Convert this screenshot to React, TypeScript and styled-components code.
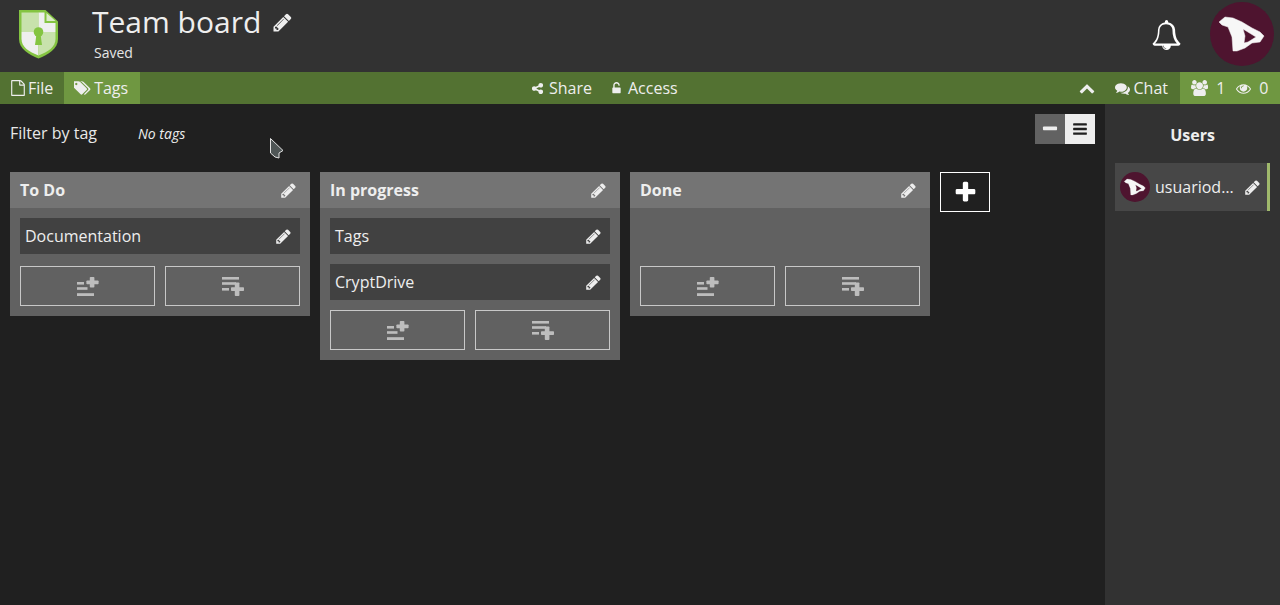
import React from "react";
import styled, { createGlobalStyle } from "styled-components";

const Global = createGlobalStyle`
  html, body { margin: 0; padding: 0; height: 100%; background: #202020; overflow: hidden; }
  body { font-family: "Open Sans", "Liberation Sans", sans-serif; color: #eee; }
  #root { height: 100%; }
  * { box-sizing: border-box; }
`;

const Page = styled.div`
  width: 1280px; height: 605px; display: flex; flex-direction: column; position: relative;
`;
const TopBar = styled.header`
  height: 72px; flex: none; background: #323232; display: flex; align-items: flex-start;
  padding-left: 18px;
`;
const LogoSlot = styled.div`width: 74px; padding-top: 9px; flex: none;`;
const TitleBlock = styled.div`display: flex; flex-direction: column; flex: 1;`;
const TitleRow = styled.div`display: flex; align-items: center; gap: 11px; height: 44px;`;
const Title = styled.h1`margin: 0; font-size: 30px; font-weight: 400; line-height: 44px; color: #eee;`;
const SavedText = styled.span`font-size: 14px; line-height: 19px; margin: -1px 0 0 2px; color: #e6e6e6;`;
const BellSlot = styled.div`
  width: 30px; height: 72px; margin-right: 29px; display: flex; align-items: center; justify-content: center;
  padding-bottom: 2px; color: #fff;
`;
const AvatarSlot = styled.div`margin: 2px 6px 0 0; width: 64px; height: 64px;`;

const ToolBar = styled.nav`
  height: 32px; flex: none; background: #537232; display: grid; grid-template-columns: 531px auto 1fr;
  font-size: 16px; color: #eee;
`;
const ToolGroup = styled.div<{ $end?: boolean }>`
  display: flex; align-items: stretch; justify-content: ${(p) => (p.$end ? "flex-end" : "flex-start")};
`;
const ToolItem = styled.div<{ $tone?: "light"; $width?: number; $gap?: number; $padEnd?: number }>`
  display: flex; align-items: center; gap: ${(p) => p.$gap ?? 4}px; padding: 0 ${(p) => p.$padEnd ?? 10}px 0 10px;
  ${(p) => (p.$width ? `width: ${p.$width}px;` : "")}
  background: ${(p) => (p.$tone === "light" ? "#6f9741" : "transparent")};
  & svg { flex: none; }
`;
const Stats = styled(ToolItem)`padding: 0 11px; gap: 8px;`;
const StatNum = styled.span`margin-right: 3px; &:last-child { margin-right: 0; }`;
const CenterGroup = styled.div`display: flex; align-items: center; gap: 18px;`;
const CenterItem = styled.div`display: flex; align-items: center; gap: 5px;`;

const Body = styled.div`flex: 1; display: flex; min-height: 0;`;
const Board = styled.main`flex: 1; background: #202020; padding: 10px; min-width: 0;`;
const FilterRow = styled.div`height: 58px; display: flex; align-items: flex-start; justify-content: space-between;`;
const FilterInfo = styled.div`display: flex; align-items: center; height: 38px;`;
const FilterLabel = styled.span`font-size: 16px; width: 128px; color: #e8e8e8;`;
const NoTags = styled.em`font-size: 14px; color: #eee;`;
const ViewToggle = styled.div`display: flex;`;
const ToggleBtn = styled.button<{ $active?: boolean }>`
  width: 30px; height: 30px; border: 0; padding: 0; display: flex; align-items: center; justify-content: center;
  background: ${(p) => (p.$active ? "#eeeeee" : "#626262")};
  color: ${(p) => (p.$active ? "#202020" : "#eeeeee")};
`;

const Columns = styled.div`display: flex; align-items: flex-start; gap: 10px;`;
const Column = styled.section`width: 300px; background: #616161;`;
const ColumnHead = styled.div`
  height: 36px; background: #747474; display: flex; align-items: center; justify-content: space-between;
  padding: 0 13px 0 10px; font-size: 16px; font-weight: 700; color: #eee;
`;
const ColumnBody = styled.div`padding: 10px;`;
const CardList = styled.div`min-height: 48px; display: flex; flex-direction: column; gap: 10px; padding-bottom: 10px;`;
const Card = styled.div`
  height: 36px; background: #414141; display: flex; align-items: center; justify-content: space-between;
  padding: 0 8px 0 5px; font-size: 16px; color: #eee;
`;
const AddRow = styled.div`display: flex; gap: 10px;`;
const AddBtn = styled.button`
  flex: 1; height: 40px; background: transparent; border: 1px solid #c8c8c8; padding: 0;
  display: flex; align-items: center; justify-content: center; color: #bdbdbd;
`;
const NewColumn = styled.button`
  width: 50px; height: 40px; background: transparent; border: 1px solid #fff; padding: 0; color: #fff;
  display: flex; align-items: center; justify-content: center;
`;

const Side = styled.aside`width: 175px; flex: none; background: #323232; padding: 0 10px;`;
const SideTitle = styled.h2`
  margin: 0; height: 59px; font-size: 16px; font-weight: 700; text-align: center; line-height: 62px; color: #eee;
`;
const UserRow = styled.div`
  height: 48px; background: #474747; border-right: 3px solid #a0b96c; display: flex; align-items: center;
  padding-left: 5px; font-size: 16px; color: #eee;
`;
const UserName = styled.span`
  width: 80px; margin: 0 9px 0 5px; white-space: nowrap; flex: none;
`;
const CursorMark = styled.svg`position: absolute; left: 270px; top: 138px;`;

const paths = {
  pencil: "M491 1536l91-91-235-235-91 91v107h128v128h107zm523-928q0-22-22-22-10 0-17 7l-542 542q-7 7-7 17 0 22 22 22 10 0 17-7l542-542q7-7 7-17zm-54-192l416 416-832 832h-416v-416zm683 96q0 53-37 90l-166 166-416-416 166-165q36-38 90-38 53 0 91 38l235 234q37 39 37 91z",
  bell: "M912 1696q0-16-16-16-59 0-101.5-42.5t-42.5-101.5q0-16-16-16t-16 16q0 73 51.5 124.5t124.5 51.5q16 0 16-16zm-666-288h1300q-266-300-266-832 0-51-24-105t-69-103-121.5-80.5-169.5-31.5-169.5 31.5-121.5 80.5-69 103-24 105q0 532-266 832zm1514 0q0 52-38 90t-90 38h-448q0 106-75 181t-181 75-181-75-75-181h-448q-52 0-90-38t-38-90q50-42 91-88t85-119.5 74.5-158.5 50-206 19.5-260q0-152 117-282.5t307-158.5q-8-19-8-39 0-40 28-68t68-28 68 28 28 68q0 20-8 39 190 28 307 158.5t117 282.5q0 139 19.5 260t50 206 74.5 158.5 85 119.5 91 88z",
  file: "M1596 380q28 28 48 76t20 88v1152q0 40-28 68t-68 28h-1344q-40 0-68-28t-28-68v-1600q0-40 28-68t68-28h896q40 0 88 20t76 48zm-444-244v376h376q-10-29-22-41l-313-313q-12-12-41-22zm384 1528v-1024h-416q-40 0-68-28t-28-68v-416h-768v1536h1280z",
  tags: "M384 448q0-53-37.5-90.5t-90.5-37.5-90.5 37.5-37.5 90.5 37.5 90.5 90.5 37.5 90.5-37.5 37.5-90.5zm1067 576q0 53-37 90l-491 492q-39 37-91 37-53 0-90-37l-715-716q-38-37-64.5-101t-26.5-117v-416q0-52 38-90t90-38h416q53 0 117 26.5t102 64.5l715 714q37 39 37 91zm384 0q0 53-37 90l-491 492q-39 37-91 37-36 0-59-14t-53-45l470-470q37-37 37-90 0-52-37-91l-715-714q-38-38-102-64.5t-117-26.5h224q53 0 117 26.5t102 64.5l715 714q37 39 37 91z",
  share: "M1344 1024q133 0 226.5 93.5t93.5 226.5-93.5 226.5-226.5 93.5-226.5-93.5-93.5-226.5q0-12 2-34l-360-180q-92 86-218 86-133 0-226.5-93.5t-93.5-226.5 93.5-226.5 226.5-93.5q126 0 218 86l360-180q-2-22-2-34 0-133 93.5-226.5t226.5-93.5 226.5 93.5 93.5 226.5-93.5 226.5-226.5 93.5q-126 0-218-86l-360 180q2 22 2 34t-2 34l360 180q92-86 218-86z",
  unlock: "M1376 768q40 0 68 28t28 68v576q0 40-28 68t-68 28h-960q-40 0-68-28t-28-68v-576q0-40 28-68t68-28h32v-320q0-185 131.5-316.5t316.5-131.5 316.5 131.5 131.5 316.5q0 26-19 45t-45 19h-64q-26 0-45-19t-19-45q0-106-75-181t-181-75-181 75-75 181v320h736z",
  comments: "M1408 768q0 139-94 257t-256.5 186.5-353.5 68.5q-86 0-176-16-124 88-278 128-36 9-86 16h-3q-11 0-20.5-8t-11.5-21q-1-3-1-6.5t.5-6.5 2-6l2.5-5 3.5-5.5 4-5 4.5-5 4-4.5q5-6 23-25t26-29.5 22.5-29 25-38.5 20.5-44q-124-72-195-177t-71-224q0-139 94-257t256.5-186.5 353.5-68.5 353.5 68.5 256.5 186.5 94 257zm384 256q0 120-71 224.5t-195 176.5q10 24 20.5 44t25 38.5 22.5 29 26 29.5 23 25q1 1 4 4.5t4.5 5 4 5 3.5 5.5l2.5 5 2 6 .5 6.5-1 6.5q-3 14-13 22t-22 7q-50-7-86-16-154-40-278-128-90 16-176 16-271 0-472-132 58 4 88 4 161 0 309-45t264-129q125-92 192-212t67-254q0-77-23-152 129 71 204 178t75 230z",
  users: "M593 896q-162 5-265 128h-134q-82 0-138-40.5t-56-118.5q0-353 124-353 6 0 43.5 21t97.5 42.5 119 21.5q67 0 133-23-5 37-5 66 0 139 81 256zm1071 637q0 120-73 189.5t-194 69.5h-874q-121 0-194-69.5t-73-189.5q0-53 3.5-103.5t14-109 26.5-108.5 43-97.5 62-81 85.5-53.5 111.5-20q10 0 43 21.5t73 48 107 48 135 21.5 135-21.5 107-48 73-48 43-21.5q61 0 111.5 20t85.5 53.5 62 81 43 97.5 26.5 108.5 14 109 3.5 103.5zm-1024-1277q0 106-75 181t-181 75-181-75-75-181 75-181 181-75 181 75 75 181zm704 384q0 159-112.5 271.5t-271.5 112.5-271.5-112.5-112.5-271.5 112.5-271.5 271.5-112.5 271.5 112.5 112.5 271.5zm576 225q0 78-56 118.5t-138 40.5h-134q-103-123-265-128 81-117 81-256 0-29-5-66 66 23 133 23 59 0 119-21.5t97.5-42.5 43.5-21q124 0 124 353zm-128-609q0 106-75 181t-181 75-181-75-75-181 75-181 181-75 181 75 75 181z",
  eye: "M1664 960q-152-236-381-353 61 104 61 225 0 185-131.5 316.5t-316.5 131.5-316.5-131.5-131.5-316.5q0-121 61-225-229 117-381 353 133 205 333.5 326.5t434.5 121.5 434.5-121.5 333.5-326.5zm-720-384q0-20-14-34t-34-14q-125 0-214.5 89.5t-89.5 214.5q0 20 14 34t34 14 34-14 14-34q0-86 61-147t147-61q20 0 34-14t14-34zm848 384q0 34-20 69-140 230-376.5 368.5t-499.5 138.5-499.5-139-376.5-368q-20-35-20-69t20-69q140-229 376.5-368t499.5-139 499.5 139 376.5 368q20 35 20 69z",
  bars: "M1664 1344v128q0 26-19 45t-45 19h-1408q-26 0-45-19t-19-45v-128q0-26 19-45t45-19h1408q26 0 45 19t19 45zm0-512v128q0 26-19 45t-45 19h-1408q-26 0-45-19t-19-45v-128q0-26 19-45t45-19h1408q26 0 45 19t19 45zm0-512v128q0 26-19 45t-45 19h-1408q-26 0-45-19t-19-45v-128q0-26 19-45t45-19h1408q26 0 45 19t19 45z",
  plus: "M1600 736v192q0 40-28 68t-68 28h-416v416q0 40-28 68t-68 28h-192q-40 0-68-28t-28-68v-416h-416q-40 0-68-28t-28-68v-192q0-40 28-68t68-28h416v-416q0-40 28-68t68-28h192q40 0 68 28t28 68v416h416q40 0 68 28t28 68z",
  minus: "M1600 736v192q0 40-28 68t-68 28h-1216q-40 0-68-28t-28-68v-192q0-40 28-68t68-28h1216q40 0 68 28t28 68z",
  chevron: "M1683 1331l-166 165q-19 19-45 19t-45-19l-531-531-531 531q-19 19-45 19t-45-19l-166-165q-19-19-19-45.5t19-45.5l742-741q19-19 45-19t45 19l742 741q19 19 19 45.5t-19 45.5z",
};

const Glyph = ({ name, size, span = 1792, color }: { name: keyof typeof paths; size: number; span?: number; color?: string }) => (
  <svg width={(size * span) / 1792} height={size} viewBox={`0 0 ${span} 1792`} fill={color ?? "currentColor"}>
    <path d={paths[name]} />
  </svg>
);

const Shield = () => (
  <svg width="41" height="50" viewBox="0 0 41 50">
    <path d="M1 1 H27.5 L40 12.5 V30 C40 40 30 45.5 20.5 49.5 C11 45.5 1 40 1 30 Z" fill="#84c441" />
    <path d="M3.5 3.5 H20.5 V23 H3.5 Z" fill="#c8e2ac" />
    <path d="M20.5 3.5 H26.5 V14 H37.5 V23 H20.5 Z" fill="#efefef" />
    <path d="M3.5 23 H20.5 V46.5 C11 43 3.5 38 3.5 30 Z" fill="#efefef" />
    <path d="M20.5 23 H37.5 V30 C37.5 38 30 43 20.5 46.5 Z" fill="#c8e2ac" />
    <path d="M28.5 4 L37.5 12 H28.5 Z" fill="#dcecc9" />
    <circle cx="20.5" cy="23" r="4.8" fill="#84c441" />
    <path d="M18.5 25 H22.5 L24 36 H17 Z" fill="#84c441" />
  </svg>
);

const DragonAvatar = ({ size }: { size: number }) => (
  <svg width={size} height={size} viewBox="0 0 64 64">
    <circle cx="32" cy="32" r="32" fill="#4e142f" />
    <path
      d="M9 20 L15 15 L23 16 L32 20 L42 26 L50 30 L54 34 L50 40 L42 41 L35 46 L27 49 L23 49 L22 35 L18 25 L12 23 Z M33 27 L35 34 L34 41 L38 40 L46 35 Z"
      fill="#f7f7f7" fillRule="evenodd" stroke="#f7f7f7" strokeWidth="0.5" strokeLinejoin="round"
    />
  </svg>
);

const AddTopIcon = () => (
  <svg width="22" height="19" viewBox="0 0 22 19" fill="currentColor">
    <rect x="0" y="5" width="7" height="2.6" />
    <rect x="0" y="10.2" width="10.5" height="2.6" />
    <rect x="0" y="16.2" width="17" height="2.8" />
    <rect x="12.8" y="0" width="4.6" height="10.6" rx="0.8" />
    <rect x="9.4" y="3.4" width="12.2" height="3.8" rx="0.8" />
  </svg>
);
const AddBottomIcon = () => (
  <svg width="22" height="19" viewBox="0 0 22 19" fill="currentColor">
    <rect x="0" y="0" width="17" height="2.6" />
    <rect x="0" y="5.2" width="14" height="2.6" />
    <rect x="0" y="11" width="7" height="2.6" />
    <rect x="12.8" y="5.4" width="4.6" height="13.6" rx="0.8" />
    <rect x="9" y="10.2" width="13" height="3.9" rx="0.8" />
  </svg>
);

const Pencil = () => <Glyph name="pencil" size={17} color="#eeeeee" />;

const columns = [
  { title: "To Do", cards: ["Documentation"] },
  { title: "In progress", cards: ["Tags", "CryptDrive"] },
  { title: "Done", cards: [] as string[] },
];

export default function App() {
  return (
    <Page>
      <Global />
      <TopBar>
        <LogoSlot><Shield /></LogoSlot>
        <TitleBlock>
          <TitleRow>
            <Title>Team board</Title>
            <Glyph name="pencil" size={21} color="#eeeeee" />
          </TitleRow>
          <SavedText>Saved</SavedText>
        </TitleBlock>
        <BellSlot><Glyph name="bell" size={34} /></BellSlot>
        <AvatarSlot><DragonAvatar size={64} /></AvatarSlot>
      </TopBar>
      <ToolBar>
        <ToolGroup>
          <ToolItem $width={64} $gap={2}><Glyph name="file" size={16} />File</ToolItem>
          <ToolItem $tone="light" $width={76} $gap={3}><Glyph name="tags" size={16} span={1920} />Tags</ToolItem>
        </ToolGroup>
        <CenterGroup>
          <CenterItem><Glyph name="share" size={13} />Share</CenterItem>
          <CenterItem><Glyph name="unlock" size={13} />Access</CenterItem>
        </CenterGroup>
        <ToolGroup $end>
          <ToolItem><Glyph name="chevron" size={16} /></ToolItem>
          <ToolItem $padEnd={12}><Glyph name="comments" size={15} />Chat</ToolItem>
          <Stats $tone="light" $width={100}>
            <Glyph name="users" size={16} span={1920} /><StatNum>1</StatNum>
            <Glyph name="eye" size={15} /><StatNum>0</StatNum>
          </Stats>
        </ToolGroup>
      </ToolBar>
      <Body>
        <Board>
          <FilterRow>
            <FilterInfo>
              <FilterLabel>Filter by tag</FilterLabel>
              <NoTags>No tags</NoTags>
            </FilterInfo>
            <ViewToggle>
              <ToggleBtn><Glyph name="minus" size={18} /></ToggleBtn>
              <ToggleBtn $active><Glyph name="bars" size={16} /></ToggleBtn>
            </ViewToggle>
          </FilterRow>
          <Columns>
            {columns.map((c) => (
              <Column key={c.title}>
                <ColumnHead>{c.title}<Pencil /></ColumnHead>
                <ColumnBody>
                  <CardList>
                    {c.cards.map((t) => (
                      <Card key={t}>{t}<Pencil /></Card>
                    ))}
                  </CardList>
                  <AddRow>
                    <AddBtn><AddTopIcon /></AddBtn>
                    <AddBtn><AddBottomIcon /></AddBtn>
                  </AddRow>
                </ColumnBody>
              </Column>
            ))}
            <NewColumn><Glyph name="plus" size={25} /></NewColumn>
          </Columns>
        </Board>
        <Side>
          <SideTitle>Users</SideTitle>
          <UserRow>
            <DragonAvatar size={30} />
            <UserName>usuariod…</UserName>
            <Pencil />
          </UserRow>
        </Side>
      </Body>
      <CursorMark width="14" height="21" viewBox="0 0 14 21">
        <path d="M0.5 0.5 L13 12.5 L9 15 V20 L5 19 L0.5 15 Z" fill="#4f5656" stroke="#e4e4e4" strokeWidth="1" />
      </CursorMark>
    </Page>
  );
}
